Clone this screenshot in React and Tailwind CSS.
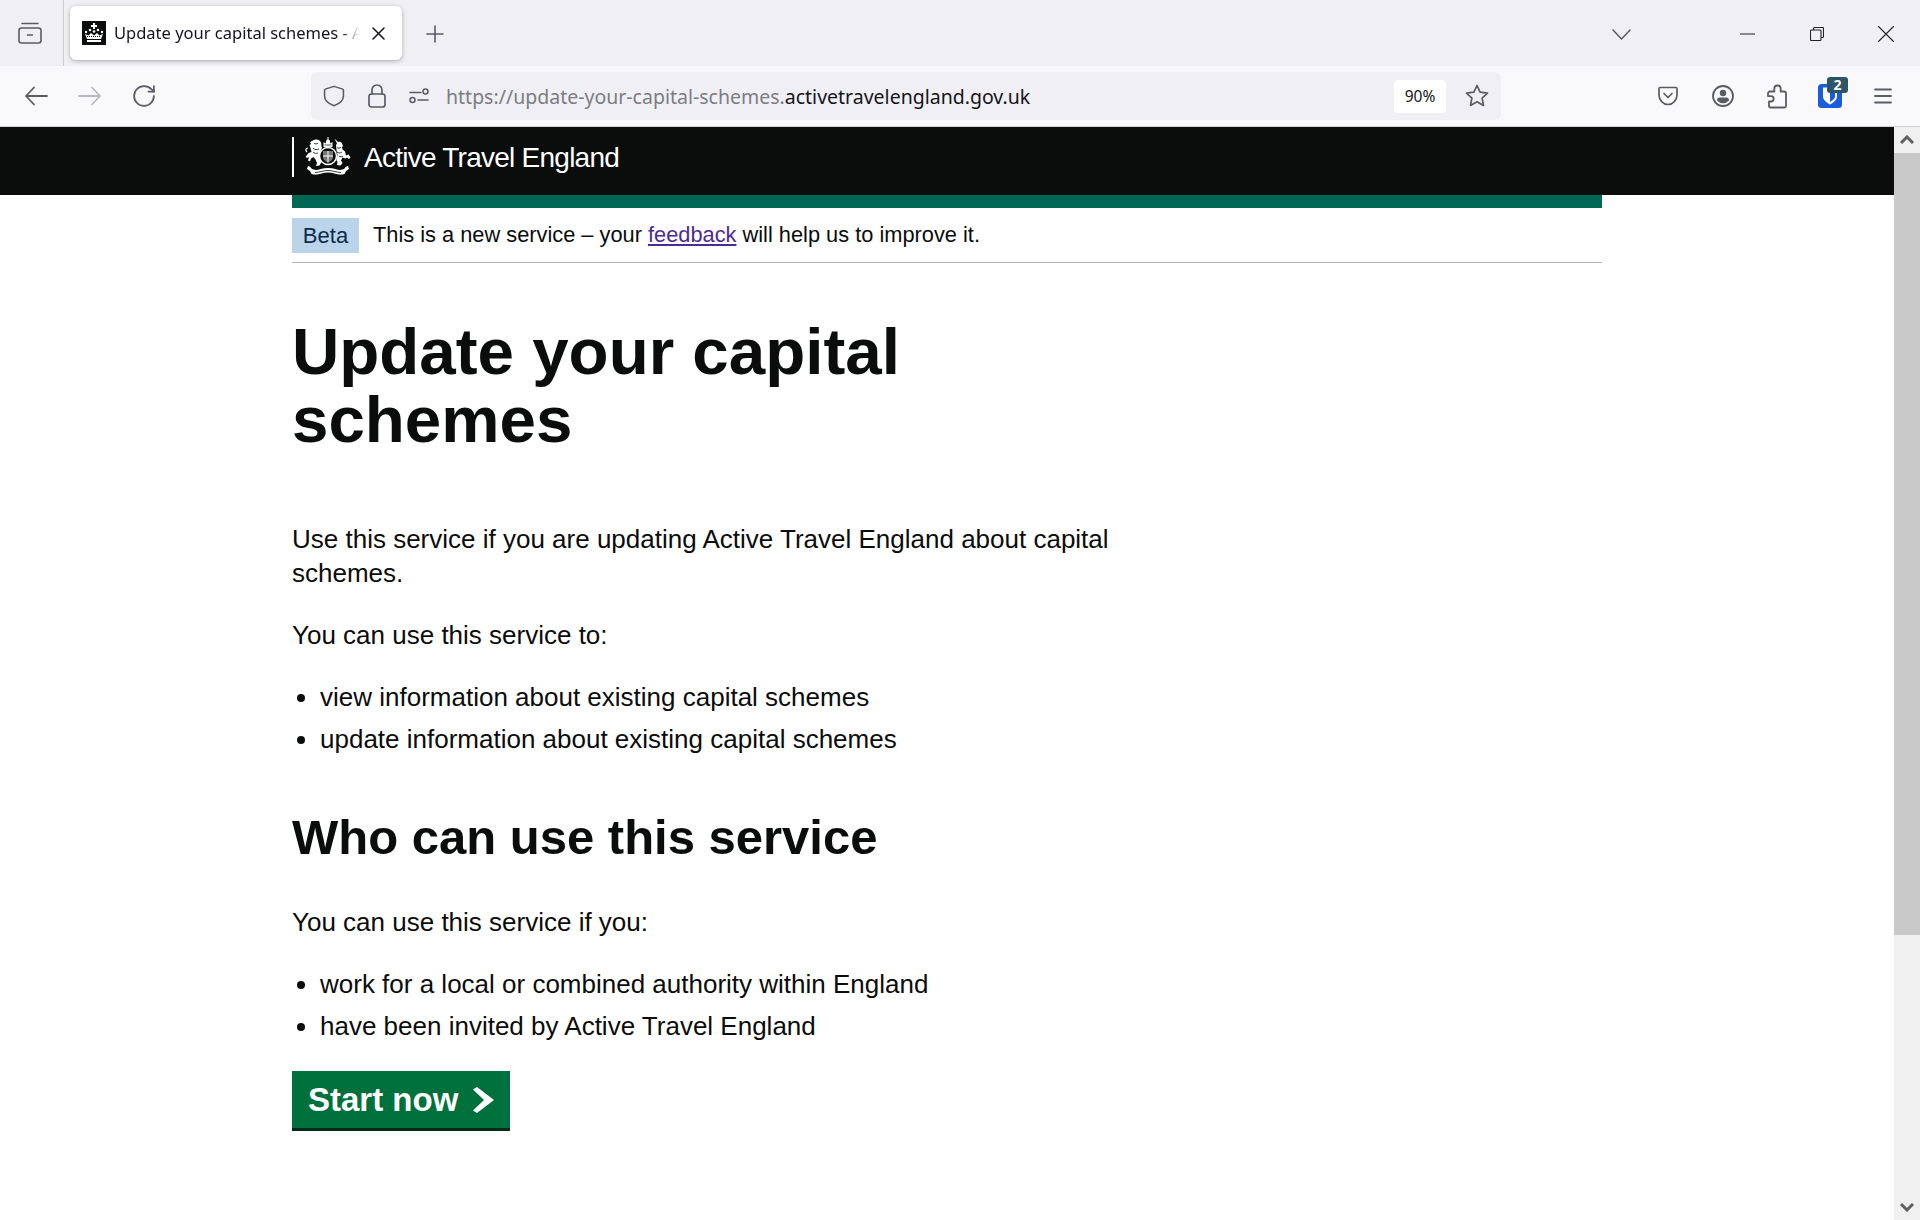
import React from 'react';

const uiFont = "font-['Noto_Sans','Open_Sans',sans-serif]";
const pageFont = "font-['Liberation_Sans',Arial,sans-serif]";
const gray = '#5b5b66';

// generic stroked toolbar icon
function Ico({ box = '0 0 24 24', className, color = gray, sw = 1.7, children }) {
  return (
    <svg viewBox={box} className={`shrink-0 ${className}`} fill="none" stroke={color} strokeWidth={sw} strokeLinecap="round" strokeLinejoin="round">
      {children}
    </svg>
  );
}

// rough version of the royal arms from the header
function Crest() {
  return (
    <svg viewBox="0 0 47 39" className="w-[47px] h-[39px] ml-[11px] shrink-0">
      {/* crown */}
      <path d="M18.500 10V5l2 1.500L21.500 3l1-.5V0h1v2.500l1 .5 1 3.500 2-1.500v5z" fill="#fff" />
      <path d="M19.500 8h7" stroke="#0b0c0c" strokeWidth=".7" />
      {/* lion */}
      <path d="M9 3c3-1 6 0 7 2.500.8 2-.2 3.500 1 5l-1.500 4L15 20l1.500 5-2 3.500-3.500.5 1-3-1.500-3.500L8.500 20l-2.500 1.500-1 3-2-1 1-3.500-2 1-1.500-1 3-4 3-1-1-4-1-3 1.500-1-1-2z" fill="#fff" />
      <path d="M9 6c1 1.500 3 1 4 0M8 11c2 2 4 2 6 1M8 15c1 1 3 2 5 1" stroke="#0b0c0c" strokeWidth=".8" fill="none" />
      <path d="M2 15c-2-2-1-4 1-4" stroke="#fff" strokeWidth="1.200" fill="none" />
      {/* unicorn */}
      <path d="M29.500 1.500l3.500 3.500c1-.5 2.500-.5 3.500.5l1.500 3.500-1 1 .5 2.500 2.500 2 1 4 2.500-1 2 3-1.500 1.500-2-1.500-1.500 1-3-1-1.500 3 1.500 2.500-2 2.500-3.500-.5.5-3-1-2 1-5-1-5-.5-5 1-1.500z" fill="#fff" />
      <path d="M36 10c-1 1.500-3 1.500-4 .5M37 15c-2 1.500-4 1-5 0M38 19c-1 1-3 1-4 0" stroke="#0b0c0c" strokeWidth=".8" fill="none" />
      {/* shield */}
      <circle cx="23" cy="19" r="8.500" fill="#0b0c0c" stroke="#fff" strokeWidth="1.500" />
      <path d="M18 14h10v6c0 3-2.500 4.500-5 5.500-2.500-1-5-2.500-5-5.500z" fill="#777" />
      <path d="M22.500 14h1v11.500h-1zM18 18.500h10v1H18z" fill="#fff" />
      {/* motto ribbon */}
      <path d="M3 29c1.500 0 2.500 1 3.500 2.500 3 2 6 1.500 9 .5 5-1.500 10-1.500 15 0 3 1 6 1.500 9-.5 1-1.500 2-2.500 3.500-2.500l1 3-3 2-1.500 3c-3 1-7 .5-10-.5-4-1.500-9-1.500-13 0-3 1-7 1.500-10 .5l-1.500-3-3-2z" fill="#fff" />
      <path d="M10 35.500c4 0 8-2 13-2s9 2 13 2" stroke="#0b0c0c" strokeWidth=".8" fill="none" />
    </svg>
  );
}

function Favicon() {
  return (
    <svg viewBox="0 0 24 24" className="w-6 h-6 shrink-0" fill="#fff">
      <rect width="24" height="24" fill="#0b0c0c" />
      <path d="M11 2h2v2h2v2h-2v2h-2V6H9V4h2z" />
      <circle cx="8" cy="9" r="1.300" /><circle cx="16" cy="9" r="1.300" />
      <circle cx="4" cy="11" r="1.200" /><circle cx="20" cy="11" r="1.200" />
      <circle cx="12" cy="10.500" r="1.300" />
      <path d="M3 13l2 5h14l2-5-3.500 1.500L15 12l-3 2.500L9 12l-2.500 2.500z" />
      <path d="M5 15.500h14" stroke="#0b0c0c" strokeWidth="1" strokeDasharray="1 1" />
      <path d="M5 19h14v2H5z" />
    </svg>
  );
}

function BitwardenIcon() {
  return (
    <div className="relative w-6 h-6 shrink-0">
      <svg viewBox="0 0 24 24" className="w-6 h-6">
        <rect width="24" height="24" rx="3.500" fill="#175ddc" />
        <path d="M5 3.500h14v9c0 3.500-3.500 6-7 8-3.500-2-7-4.500-7-8z" fill="#fff" />
        <path d="M12 5.500h5v7c0 2.300-2.500 4-5 5.500z" fill="#175ddc" />
      </svg>
      <span className="absolute top-[-7px] left-[9px] w-[21px] h-4 rounded-[3px] bg-[#2c5667] text-white text-[14px] leading-4 font-bold text-center">2</span>
    </div>
  );
}

function Scrollbar() {
  return (
    <div className="w-[26px] shrink-0 bg-[#f0f0f0] flex flex-col items-center">
      <svg viewBox="0 0 14 9" className="w-[14px] h-[9px] mt-[8px] mb-[9px]" fill="none" stroke="#606060" strokeWidth="3"><path d="M1 8l6-6 6 6" /></svg>
      <div className="w-full h-[782px] bg-[#c9c9c9]" />
      <div className="flex-1" />
      <svg viewBox="0 0 14 9" className="w-[14px] h-[9px] mb-[8px]" fill="none" stroke="#606060" strokeWidth="3"><path d="M1 1l6 6 6-6" /></svg>
    </div>
  );
}

function TabStrip() {
  return (
    <div className="h-[66px] bg-[#f0f0f4] flex items-center">
      <div className="w-[64px] h-full flex items-center justify-center border-r border-[#c9c9ce] pr-[3px]">
        <Ico box="0 0 24 22" className="w-6 h-[22px]" sw={1.600}>
          <rect x="1" y="6" width="22" height="15" rx="2.500" />
          <path d="M4 1.500h16M9.500 13h5" />
        </Ico>
      </div>
      <div className="ml-[6px] w-[332px] h-[54px] bg-white rounded-[6px] shadow-[0_1px_4px_rgba(0,0,0,0.3)] flex items-center pl-[12px]">
        <Favicon />
        <span className="ml-[8px] w-[253px] text-[16.500px] text-[#15141a] whitespace-nowrap [mask-image:linear-gradient(to_right,#000_90%,transparent_97%)]">Update your capital schemes - A</span>
        <Ico box="0 0 13 13" className="w-[13px] h-[13px] ml-[5px]" color="#15141a" sw={1.500}>
          <path d="M1 1l11 11M12 1L1 12" />
        </Ico>
      </div>
      <Ico box="0 0 18 18" className="w-[18px] h-[18px] ml-[24px] mt-[2px]" sw={1.600}>
        <path d="M9 1v16M1 9h16" />
      </Ico>
      <div className="flex-1" />
      <Ico box="0 0 19 11" className="w-[19px] h-[11px] mt-[2px]" sw={1.500}>
        <path d="M1 1l8.500 9L18 1" />
      </Ico>
      <Ico box="0 0 15 2" className="w-[15px] h-[2px] ml-[109px] mt-[2px]" color="#222" sw={1}>
        <path d="M0 1h15" />
      </Ico>
      <svg viewBox="0 0 14 14" className="w-[14px] h-[14px] ml-[55px] mt-[2px]" fill="none" stroke="#222" strokeWidth="1.100">
        <rect x="0.500" y="3" width="10.500" height="10.500" rx="1" />
        <path d="M3.500 3V1.500a1 1 0 0 1 1-1h8a1 1 0 0 1 1 1v8a1 1 0 0 1-1 1H11" />
      </svg>
      <Ico box="0 0 16 16" className="w-4 h-4 ml-[54px] mr-[26px] mt-[2px]" color="#222" sw={1.100}>
        <path d="M.5.500l15 15M15.500.500l-15 15" />
      </Ico>
    </div>
  );
}

function Toolbar() {
  return (
    <div className="h-[60px] bg-[#f9f9fb] flex items-center border-b border-[#cfcfd4] box-content">
      <Ico className="w-6 h-6 ml-[24px]" sw={1.800}><path d="M23 12H2M10 3.500L2 12l8 8.500" /></Ico>
      <Ico className="w-6 h-6 ml-[30px]" color="#b9b9be" sw={1.800}><path d="M1 12h21M14 3.500l8 8.500-8 8.500" /></Ico>
      <Ico box="2 2 20 20" className="w-[22px] h-[22px] ml-[31px]" sw={1.600}>
        <path d="M21 12a9 9 0 1 1-9-9c2.520 0 4.930 1 6.740 2.740L21 8" />
        <path d="M21 3v5h-5" />
      </Ico>
      <div className="ml-[156px] w-[1190px] h-12 rounded-[6px] bg-[#f0f0f4] flex items-center pl-[12px] pr-[12px]">
        <Ico className="w-[22px] h-6" sw={1.700}>
          <path d="M12 1.500l9.500 3c.5.2.8.6.8 1.200V12c0 5-4.500 8.500-10.300 10.700C6.200 20.500 1.700 17 1.700 12V5.700c0-.6.3-1 .8-1.200z" />
        </Ico>
        <Ico box="0 0 18 24" className="w-[18px] h-6 ml-[23px]" sw={1.700}>
          <rect x="1" y="10" width="16" height="13" rx="2.500" />
          <path d="M4 10V6a5 5 0 0 1 10 0v4" />
        </Ico>
        <Ico box="0 0 20 16" className="w-5 h-4 ml-[23px]" sw={1.500}>
          <path d="M1 4.500h11M9 12h10" />
          <circle cx="16.500" cy="3.500" r="2.500" />
          <circle cx="3.500" cy="12" r="2.500" />
        </Ico>
        <span className="ml-[17px] mt-[2px] text-[19.500px] text-[#7c7c83] whitespace-nowrap">https://update-your-capital-schemes.<span className="text-[#15141a]">activetravelengland.gov.uk</span></span>
        <div className="flex-1" />
        <span className="w-[52px] h-[33px] rounded-[4px] bg-white text-[#15141a] text-[15.500px] leading-[33px] text-center">90%</span>
        <Ico className="w-6 h-6 ml-[19px]" sw={1.700}>
          <path d="M12 1.500l3.100 6.700 7.400.9-5.400 5 1.400 7.300-6.500-3.600-6.500 3.600 1.400-7.300-5.400-5 7.400-.9z" />
        </Ico>
      </div>
      <div className="flex-1" />
      <Ico box="0 0 20 20" className="w-5 h-5" sw={1.700}>
        <path d="M2 1.500h16c.5 0 1 .5 1 1V9c0 5-4 9.500-9 9.500S1 14 1 9V2.500c0-.5.5-1 1-1z" />
        <path d="M6 7.500l4 4 4-4" />
      </Ico>
      <svg viewBox="0 0 22 22" className="w-[22px] h-[22px] ml-[34px] shrink-0" fill="none" stroke={gray} strokeWidth="1.800">
        <circle cx="11" cy="11" r="10" />
        <circle cx="11" cy="8" r="3.200" fill={gray} stroke="none" />
        <path d="M5 15c0-1.500 1-2.500 2.500-2.500h7c1.500 0 2.500 1 2.500 2.500v.5a8 8 0 0 1-12 0z" fill={gray} stroke="none" />
      </svg>
      <Ico box="0 0 20 25" className="w-5 h-[25px] ml-[33px]" sw={1.800}>
        <path d="M10.500 1.500a3.200 3.200 0 0 1 3.200 3.200v2.800H17a2 2 0 0 1 2 2V22a1.500 1.500 0 0 1-1.500 1.500h-14A1.500 1.500 0 0 1 2 22v-4.500h2a2.700 2.700 0 0 0 0-5.400H1V9.500a2 2 0 0 1 2-2h4.300V4.700a3.200 3.200 0 0 1 3.200-3.200z" />
      </Ico>
      <div className="ml-[31px]"><BitwardenIcon /></div>
      <Ico box="0 0 18 16" className="w-[18px] h-4 ml-[32px] mr-[28px]" sw={1.800}>
        <path d="M1 1.500h16M1 8h16M1 14.500h16" />
      </Ico>
    </div>
  );
}

export default function App() {
  return (
    <div className={`h-[1220px] flex flex-col overflow-hidden bg-white ${pageFont}`}>
      <div className={uiFont}>
        <TabStrip />
        <Toolbar />
      </div>
      <div className="flex-1 flex min-h-0">
        <div className="flex-1 min-w-0">
          <header className="h-[68px] bg-[#0b0c0c]">
            <div className="ml-[292px] w-[1310px] h-full flex items-start pt-[10px]">
              <div className="w-[2px] h-10 shrink-0 bg-white" />
              <Crest />
              <span className="ml-[12px] text-white text-[28px] leading-[42px] tracking-[-0.75px]">Active Travel England</span>
            </div>
          </header>
          <main className="ml-[292px] w-[1310px] text-[#0b0c0c]">
            <div className="h-[13px] bg-[#006853]" />
            <div className="flex items-center h-[55px] border-b border-[#b1b4b6] pt-[1px]">
              <span className="w-[67px] h-[35px] bg-[#bbd4ea] text-[#0c2d4a] text-[22px] leading-[35px] text-center">Beta</span>
              <p className="ml-[14px] text-[21.800px]">This is a new service – your <a className="underline text-[#4c2c92]">feedback</a> will help us to improve it.</p>
            </div>
            <div className="w-[820px]">
              <h1 className="mt-[55px] text-[65.500px] leading-[68px] font-bold">Update your capital schemes</h1>
              <p className="mt-[68px] text-[26px] leading-[34px]">Use this service if you are updating Active Travel England about capital schemes.</p>
              <p className="mt-[28px] text-[26px] leading-[34px]">You can use this service to:</p>
              <ul className="mt-[28px] ml-[28px] list-disc text-[26px] leading-[34px]">
                <li className="mb-[8px]">view information about existing capital schemes</li>
                <li>update information about existing capital schemes</li>
              </ul>
              <h2 className="mt-[52px] text-[49px] leading-[58px] font-bold">Who can use this service</h2>
              <p className="mt-[39px] text-[26px] leading-[34px]">You can use this service if you:</p>
              <ul className="mt-[28px] ml-[28px] list-disc text-[26px] leading-[34px]">
                <li className="mb-[8px]">work for a local or combined authority within England</li>
                <li>have been invited by Active Travel England</li>
              </ul>
              <a className="mt-[28px] inline-flex items-center h-[60px] w-[218px] pl-4 bg-[#00703c] border-b-[3px] border-[#002d18] text-white text-[33px] font-bold">
                Start now
                <svg viewBox="0 0 21 26" className="w-[21px] h-[26px] ml-[15px]" fill="#fff"><path d="M0 2.500L4 0l17 13L4 26l-4-2.500L11 13z" /></svg>
              </a>
            </div>
          </main>
        </div>
        <Scrollbar />
      </div>
    </div>
  );
}
